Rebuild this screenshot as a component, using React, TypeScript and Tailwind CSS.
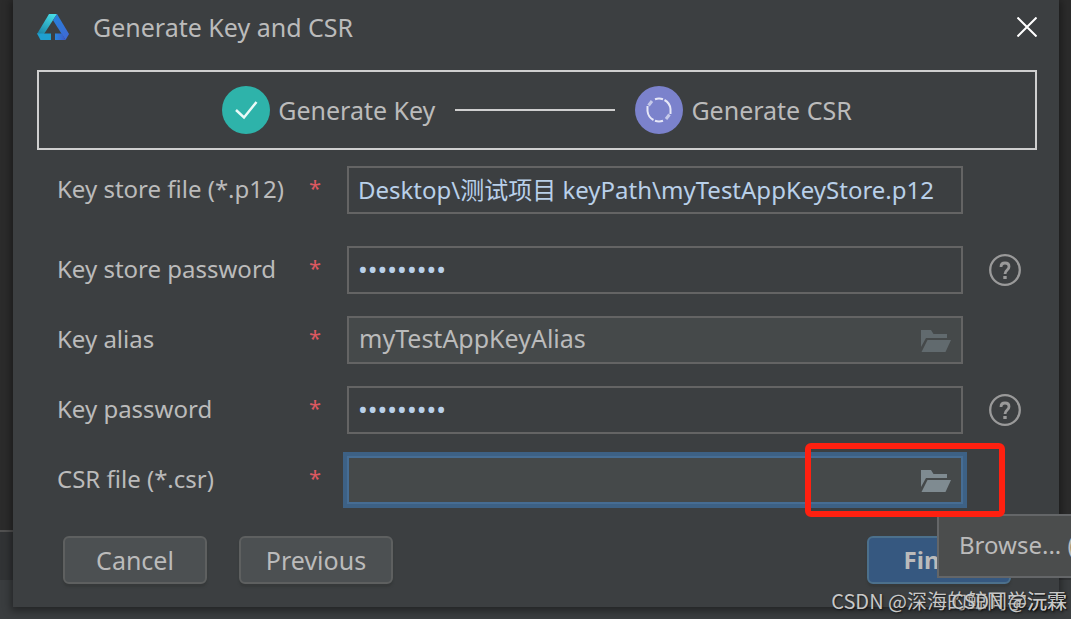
import type { ReactNode } from 'react'

function Logo() {
  return (
    <svg className="h-[26px] w-8" viewBox="0 0 32 26" aria-hidden="true">
      <defs>
        <linearGradient id="logo-left" x1="0.7" y1="0" x2="0.2" y2="1">
          <stop offset="0" stopColor="#46dbe6" />
          <stop offset="1" stopColor="#1b86a8" />
        </linearGradient>
        <linearGradient id="logo-right" x1="0" y1="0" x2="1" y2="1">
          <stop offset="0" stopColor="#2383dc" />
          <stop offset="1" stopColor="#4267d3" />
        </linearGradient>
        <linearGradient id="logo-foot" x1="0" y1="0" x2="1" y2="0">
          <stop offset="0" stopColor="#2a86dd" />
          <stop offset="1" stopColor="#3d58c8" />
        </linearGradient>
      </defs>
      <path d="M12 0h8L7 20H0z" fill="url(#logo-left)" />
      <path d="M0 19.500h14V26H3.500z" fill="#1f9fd0" />
      <path d="M20 0l12 20-3.500 6L16 6.200z" fill="url(#logo-right)" />
      <path d="M18 19.500h7L28.500 26H18z" fill="url(#logo-foot)" />
    </svg>
  )
}

function FolderIcon({ className }: { className: string }) {
  return (
    <svg className={className} viewBox="0 0 30 22" fill="currentColor" aria-hidden="true">
      <path d="M0 0h10l2.500 4H26v4H5L0 17z" />
      <path d="M6.500 10H30l-5.500 12H0.500z" />
    </svg>
  )
}

function HelpButton({ label }: { label: string }) {
  return (
    <button type="button" aria-label={label} className="ml-[26px] block h-8 w-8 text-[#9a9a9a]">
      <svg viewBox="0 0 32 32" fill="none" stroke="currentColor" aria-hidden="true">
        <circle cx="16" cy="16" r="14.800" strokeWidth="2.300" />
        <path d="M12 13c0-2.600 1.600-4 4-4s4 1.500 4 3.700c0 3.300-4 3.300-4 7.300" strokeWidth="2.800" />
        <path d="M14.300 23.500h3.400" strokeWidth="3" />
      </svg>
    </button>
  )
}

type RowProps = {
  id: string
  label: string
  children: ReactNode
  help?: string
}

function Row({ id, label, children, help }: RowProps) {
  return (
    <div className="flex h-12 items-center pl-5">
      <label htmlFor={id} className="flex w-[290px] shrink-0 items-center pb-[2px] text-2xl leading-8">
        <span className="w-[252px]">{label}</span>
        <span className="pb-1 text-[22px] text-[#db5860]">*</span>
      </label>
      <div className="relative h-12 min-w-0 flex-1">{children}</div>
      <div className="w-[74px] shrink-0">{help && <HelpButton label={help} />}</div>
    </div>
  )
}

const field = 'h-12 w-full border-2 border-[#646464] px-[9px] text-[#b9d0e9] outline-none'
const button =
  'h-12 rounded-md border-2 border-[#5e6060] bg-[#4c5052] shadow-[0_3px_2px_#36393a]'

export default function App() {
  return (
    <div className="relative grid min-h-screen overflow-hidden bg-[#2b2b2b] font-['Noto_Sans','Noto_Sans_CJK_SC',sans-serif] text-[25px] leading-8 text-[#bbbbbb]">
      {/* Editor window behind the dialog */}
      <div className="col-start-1 row-start-1 flex flex-col">
        <div className="flex-1 bg-[#2b2b2b]" />
        <div className="h-[50px] border-t-2 border-[#515151] bg-[#313335]" />
        <div className="h-[39px] bg-[#3a3d3f]" />
      </div>

      <main className="z-10 col-start-1 row-start-1 mr-3 mb-3 ml-[13px] bg-[#3c3f41] pr-[22px] pb-[23px] pl-6 shadow-[0_2px_8px_2px_#00000066]">
        <header className="flex h-[54px] items-center">
          <Logo />
          <h1 className="ml-6 flex-1">Generate Key and CSR</h1>
          <button type="button" aria-label="Close" className="h-5 w-5 text-white">
            <svg viewBox="0 0 20 20" stroke="currentColor" strokeWidth="2" aria-hidden="true">
              <path d="M0.500 0.500l19 19M19.500 0.500l-19 19" />
            </svg>
          </button>
        </header>

        {/* Wizard steps */}
        <ol className="mt-4 flex h-20 items-center justify-center border-2 border-[#cfcfcf]">
          <li className="flex items-center">
            <svg className="h-12 w-12" viewBox="0 0 48 48" fill="none" aria-hidden="true">
              <circle cx="24" cy="24" r="24" fill="#2eb3aa" />
              <path d="M14 24l8 7.500L34.500 16" stroke="#eafaf8" strokeWidth="2.500" />
            </svg>
            <span className="ml-2">Generate Key</span>
          </li>
          <li aria-hidden="true" className="mx-5 h-[2px] w-40 bg-[#cfcfcf]" />
          <li className="flex items-center">
            <svg className="h-12 w-12" viewBox="0 0 48 48" fill="none" aria-hidden="true">
              <circle cx="24" cy="24" r="24" fill="#7b82cc" />
              <g stroke="#e6e7f7" strokeWidth="2">
                <path d="M20 13.200a11.500 11.500 0 0 1 8 0M29.500 14a11.500 11.500 0 0 1 6 9v5M28 34.800a11.500 11.500 0 0 1-8 0M18.500 34a11.500 11.500 0 0 1-6-9v-5" />
                <path d="M13.500 19.500l3.500-4.500M34.500 28.500l-3.500 4.500" strokeWidth="3" opacity="0.700" />
              </g>
            </svg>
            <span className="ml-2">Generate CSR</span>
          </li>
        </ol>

        <form className="mt-4">
          <Row id="store-file" label="Key store file (*.p12)">
            <input
              id="store-file"
              className={`${field} pb-1 text-2xl`}
              defaultValue="Desktop\测试项目 keyPath\myTestAppKeyStore.p12"
            />
          </Row>

          <div className="mt-8 space-y-[22px]">
            <Row id="store-password" label="Key store password" help="Key store password help">
              <input id="store-password" type="password" className={`${field} pb-[2px] text-[26px]`} defaultValue="abcd12345" />
            </Row>
            <Row id="alias" label="Key alias">
              <input
                id="alias"
                readOnly
                className="h-12 w-full border-2 border-[#646464] bg-[#45494a] px-[10px] pb-1 text-[#bbbbbb] outline-none"
                defaultValue="myTestAppKeyAlias"
              />
              <FolderIcon className="absolute top-[14px] right-3 h-[22px] w-[30px] text-[#616a6e]" />
            </Row>
            <Row id="key-password" label="Key password" help="Key password help">
              <input id="key-password" type="password" className={`${field} pb-[2px] text-[26px]`} defaultValue="abcd12345" />
            </Row>
            <Row id="csr-file" label="CSR file (*.csr)">
              <input
                id="csr-file"
                className="h-12 w-full border-2 border-[#466d94] bg-[#45494a] px-[10px] ring-4 ring-[#3d6185] outline-none"
              />
              <button type="button" aria-label="Browse" className="absolute top-[14px] right-3 h-[22px] w-[30px]">
                <FolderIcon className="h-[22px] w-[30px] text-[#7f8b91]" />
              </button>
              {/* Highlight and tooltip over the browse button */}
              <div className="pointer-events-none absolute -top-[13px] -right-[42px] z-20 h-[74px] w-[200px] rounded-md border-[6px] border-[#ff2010]" />
              <div
                role="tooltip"
                className="absolute top-[58px] left-[calc(100%-26px)] z-10 flex h-16 w-[140px] items-center border-2 border-[#646668] bg-[#4b4d4d] pb-[2px] pl-5 text-2xl whitespace-nowrap"
              >
                Browse... (
              </div>
            </Row>
          </div>

          <div className="mt-8 flex px-[26px]">
            <button type="button" className={`${button} w-36`}>Cancel</button>
            <button type="button" className={`${button} ml-8 w-[154px]`}>Previous</button>
            <button
              type="submit"
              className="ml-auto h-12 w-36 rounded-md border-2 border-[#4c708c] bg-[#365880] text-2xl font-bold shadow-[0_3px_2px_#36393a]"
            >
              Finish
            </button>
          </div>
        </form>
      </main>

      {/* Watermark, printed twice with the same right edge */}
      <div className="absolute right-1 bottom-1 z-20 grid justify-items-end font-['Noto_Sans_CJK_SC',sans-serif] text-xl leading-7 text-[#c8c8c8] [text-shadow:1px_1px_2px_#00000099]">
        <span className="col-start-1 row-start-1">CSDN @深海的鲸同学沅霖</span>
        <span className="col-start-1 row-start-1">CSDN @沅霖</span>
      </div>
    </div>
  )
}
